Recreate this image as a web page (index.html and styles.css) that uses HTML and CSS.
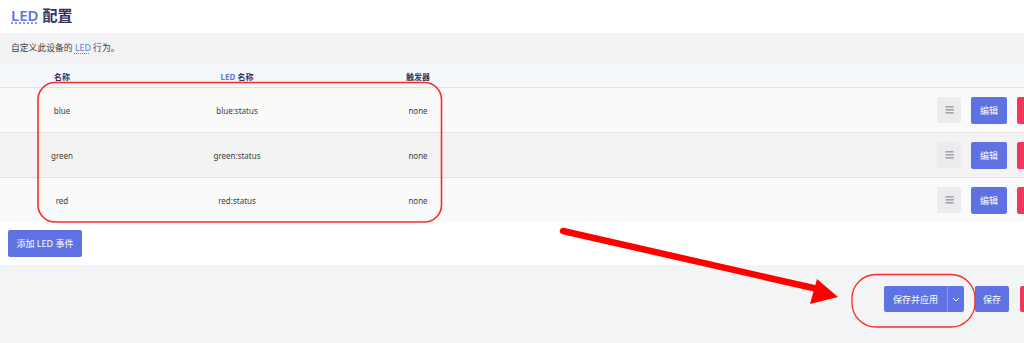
FILE: index.html
```html
<!DOCTYPE html>
<html lang="zh">
<head>
<meta charset="utf-8">
<link rel="stylesheet" href="styles.css">
</head>
<body>
<div class="page">
  <div class="card">
    <h2 class="title"><abbr class="abbr">LED</abbr> 配置</h2>
    <div class="desc">自定义此设备的 <abbr class="abbr">LED</abbr> 行为。</div>
    <div class="table">
      <div class="row head">
        <div class="c1">名称</div>
        <div class="c2"><abbr class="abbr">LED</abbr> 名称</div>
        <div class="c3">触发器</div>
        <div class="ca"></div>
      </div>
      <div class="row odd">
        <div class="c1">blue</div>
        <div class="c2">blue:status</div>
        <div class="c3">none</div>
        <div class="ca"><span class="handle">☰</span><span class="btn blue">编辑</span><span class="btn red"></span></div>
      </div>
      <div class="row even">
        <div class="c1">green</div>
        <div class="c2">green:status</div>
        <div class="c3">none</div>
        <div class="ca"><span class="handle">☰</span><span class="btn blue">编辑</span><span class="btn red"></span></div>
      </div>
      <div class="row odd">
        <div class="c1">red</div>
        <div class="c2">red:status</div>
        <div class="c3">none</div>
        <div class="ca"><span class="handle">☰</span><span class="btn blue">编辑</span><span class="btn red"></span></div>
      </div>
    </div>
    <div class="add-area"><span class="btn blue add">添加 LED 事件</span></div>
  </div>
  <div class="footer">
    <span class="split"><span class="btn blue main">保存并应用</span><span class="btn blue drop"><svg width="8" height="5" viewBox="0 0 8 5"><path d="M1 1 L4 4 L7 1" fill="none" stroke="#fff" stroke-width="1"/></svg></span></span>
    <span class="btn blue save">保存</span>
    <span class="btn red reset"></span>
  </div>
  <svg class="marks" width="1024" height="343" viewBox="0 0 1024 343">
    <rect x="38" y="82.5" width="403.5" height="139.5" rx="17" ry="17" fill="none" stroke="#ff2a2a" stroke-width="1.6"/>
    <rect x="852" y="274.5" width="123" height="52.5" rx="24" ry="24" fill="none" stroke="#ff2a2a" stroke-width="1.3"/>
    <line x1="563" y1="231" x2="822" y2="290" stroke="#ff0000" stroke-width="6.5" stroke-linecap="round"/>
    <polygon points="838,297 817,279 810,304" fill="#ff0000"/>
  </svg>
</div>
</body>
</html>
```

FILE: styles.css
```css
html, body {
  margin: 0;
  padding: 0;
  overflow: hidden;
}
body {
  width: 1024px;
  height: 343px;
  background: #f3f4f6;
  font-family: "Noto Sans", "Noto Sans CJK SC", sans-serif;
  color: #404040;
}
.page {
  position: relative;
  width: 1024px;
  height: 343px;
  overflow: hidden;
}
.card {
  background: #fff;
  width: 1024px;
}
.title {
  margin: 0;
  height: 33px;
  box-sizing: border-box;
  padding: 5px 0 0 11px;
  font-size: 15px;
  font-weight: 600;
  color: #32325d;
  line-height: 20px;
}
.abbr {
  text-decoration: underline dotted;
  text-underline-offset: 2px;
  color: #5e72e4;
  cursor: help;
}
.desc {
  height: 30px;
  box-sizing: border-box;
  background: #f3f3f5;
  font-size: 8.8px;
  line-height: 30px;
  padding-left: 11px;
  color: #404040;
}
.table {
  width: 1070px;
}
.row {
  display: grid;
  grid-template-columns: 124px 226px 136px 1fr;
  align-items: center;
  font-size: 8px;
  border-bottom: 1px solid #e2e2e4;
}
.row > div {
  text-align: center;
}
.row.head {
  height: 22px;
  padding-top: 2px;
  background: #f5f8fb;
  font-weight: 700;
  color: #32325d;
}
.row.odd {
  height: 44px;
  background: #fafafa;
}
.row.even {
  height: 44px;
  background: #f3f3f3;
}
.row:last-child {
  border-bottom: none;
}
.row .ca {
  display: flex;
  justify-content: flex-end;
  align-items: center;
  gap: 10px;
  padding-right: 17px;
}
.handle {
  width: 24px;
  height: 26px;
  background: #ececec;
  border-radius: 2px;
  color: #9aa4b2;
  font-size: 9px;
  display: flex;
  align-items: center;
  justify-content: center;
}
.btn {
  display: inline-flex;
  align-items: center;
  justify-content: center;
  height: 27px;
  border-radius: 2px;
  font-size: 9px;
  color: #fff;
  box-sizing: border-box;
}
.btn.blue {
  background: #5e72e4;
}
.btn.red {
  background: #f5365c;
}
.ca .btn {
  width: 36px;
}
.add-area {
  height: 43px;
  box-sizing: border-box;
  padding: 8px 0 0 8px;
}
.btn.add {
  width: 74px;
  height: 27px;
  font-size: 9px;
}
.footer {
  display: flex;
  justify-content: flex-end;
  align-items: center;
  gap: 11px;
  padding-top: 21px;
  width: 1056px;
}
.split {
  display: flex;
}
.btn.main {
  width: 63px;
  height: 26px;
  border-radius: 2px 0 0 2px;
  font-size: 9px;
}
.btn.drop {
  width: 17px;
  height: 26px;
  border-radius: 0 2px 2px 0;
  border-left: 1px solid #8a98ec;
}
.btn.save {
  width: 34px;
  height: 26px;
}
.btn.reset {
  width: 36px;
  height: 26px;
}
.marks {
  position: absolute;
  left: 0;
  top: 0;
  pointer-events: none;
}
```
